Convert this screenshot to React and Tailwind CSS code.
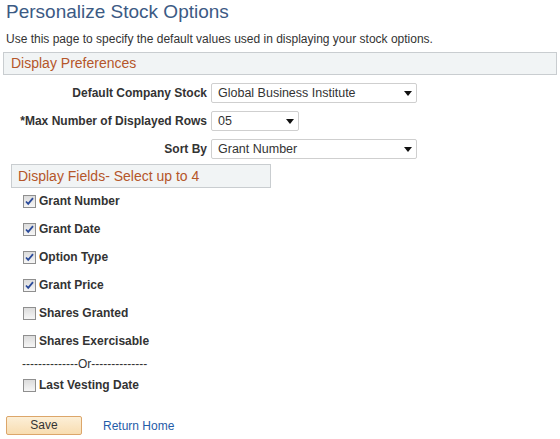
const font = { fontFamily: '"Liberation Sans", Arial, sans-serif' };

const Arrow = () => (
  <svg width="8" height="5" viewBox="0 0 8 5" className="absolute right-[4px] top-[7px]">
    <path d="M0 0h8L4 5z" fill="#111" />
  </svg>
);

const Select = ({ value, width }) => (
  <div
    className={`relative h-[20px] border border-[#cfcfcf] rounded-[2px] bg-white pl-[6px] text-[12.5px] leading-[18px] text-[#333] ${width}`}
  >
    {value}
    <Arrow />
  </div>
);

const Field = ({ label, children }) => (
  <div className="flex items-center h-[20px]">
    <div className="w-[211px] pr-[4px] text-right text-[12px] font-bold text-[#333]">{label}</div>
    {children}
  </div>
);

const Check = ({ label, checked }) => (
  <div className="flex items-center h-[16px] pl-[23px]">
    <div className="relative w-[13px] h-[13px] border border-[#8f8f8f] bg-gradient-to-b from-[#dcdcdc] to-[#f6f6f6]">
      {checked && (
        <svg width="11" height="11" viewBox="0 0 11 11" className="absolute left-[0px] top-[0px]">
          <path d="M2 5.5l2.2 2.3L9 2.2" stroke="#2a4a9a" strokeWidth="1.8" fill="none" />
        </svg>
      )}
    </div>
    <span className="ml-[3px] text-[12px] font-bold text-[#333]">{label}</span>
  </div>
);

export default function App() {
  return (
    <div className="w-[560px] h-[439px] bg-white overflow-hidden" style={font}>
      <h1 className="pl-[6px] pt-[1px] text-[19px] leading-[22px] text-[#3c5a84]">Personalize Stock Options</h1>
      <p className="pl-[6px] mt-[9px] text-[12px] leading-[14px] text-[#333]">
        Use this page to specify the default values used in displaying your stock options.
      </p>
      <div className="ml-[3px] mr-[3px] mt-[6px] h-[23px] border border-[#c9cdd0] bg-[#f1f4f5] pl-[7px] text-[14px] leading-[21px] text-[#b5562a]">
        Display Preferences
      </div>
      <div className="mt-[8px] flex flex-col gap-[8px]">
        <Field label="Default Company Stock">
          <Select value="Global Business Institute" width="w-[206px]" />
        </Field>
        <Field label="*Max Number of Displayed Rows">
          <Select value="05" width="w-[88px]" />
        </Field>
        <Field label="Sort By">
          <Select value="Grant Number" width="w-[206px]" />
        </Field>
      </div>
      <div className="ml-[11px] mt-[5px] w-[260px] h-[24px] border border-[#c9cdd0] bg-[#f1f4f5] pl-[6px] text-[14px] leading-[22px] text-[#b5562a]">
        Display Fields- Select up to 4
      </div>
      <div className="mt-[5px] flex flex-col gap-[12px]">
        <Check label="Grant Number" checked />
        <Check label="Grant Date" checked />
        <Check label="Option Type" checked />
        <Check label="Grant Price" checked />
        <Check label="Shares Granted" />
        <Check label="Shares Exercisable" />
      </div>
      <div className="pl-[22px] mt-[8px] text-[12px] leading-[14px] text-[#333]">--------------Or--------------</div>
      <div className="mt-[6px]">
        <Check label="Last Vesting Date" />
      </div>
      <div className="mt-[23px] flex items-center pl-[6px]">
        <button className="w-[76px] h-[19px] border border-[#dca66a] rounded-[2px] bg-gradient-to-b from-[#fcefd7] to-[#f8ddb1] text-[12px] leading-[17px] text-[#333]">
          Save
        </button>
        <a className="ml-[21px] text-[12px] text-[#1f5ca8] cursor-pointer">Return Home</a>
      </div>
    </div>
  );
}
